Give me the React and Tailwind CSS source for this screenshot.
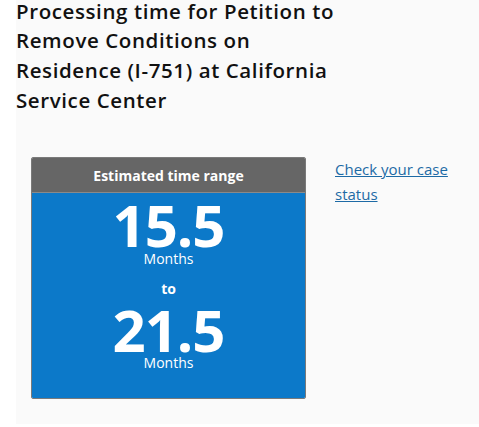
import React from 'react';

const font = { fontFamily: '"Open Sans", Lato, sans-serif' };

export default function App() {
  return (
    <div className="w-[479px] h-[427px] bg-white pl-4 overflow-hidden" style={font}>
      <div className="h-[427px] bg-[#fafafa]">
        <h1 className="text-[20.5px] leading-[29.75px] font-semibold tracking-[0.6px] text-[#111] -mt-[3.5px]">
          Processing time for Petition to
          <br />
          Remove Conditions on
          <br />
          Residence (I-751) at California
          <br />
          Service Center
        </h1>
        <div className="flex items-start mt-[41.5px] pl-[15px]">
          <div className="w-[275px] border border-[#7a7a7a] rounded-[2px] overflow-hidden">
            <div className="h-[35px] bg-[#666666] border-b border-[#8a8a8a] flex items-center justify-center text-white text-[14px] font-bold">
              Estimated time range
            </div>
            <div className="bg-[#0c79c9] text-white flex flex-col items-center pt-[10px] pb-[27px]">
              <div className="text-[58px] leading-[44px] font-bold tracking-[-1px]">15.5</div>
              <div className="text-[14px] leading-[16px] mt-[4px]">Months</div>
              <div className="text-[14px] leading-[16px] font-bold mt-[14px]">to</div>
              <div className="text-[58px] leading-[44px] font-bold mt-[11px] tracking-[-1px]">21.5</div>
              <div className="text-[14px] leading-[16px] mt-[3px]">Months</div>
            </div>
          </div>
          <a href="#" className="ml-[29px] text-[15px] leading-[25px] text-[#1d6aa5] underline w-[130px]">
            Check your case status
          </a>
        </div>
      </div>
    </div>
  );
}
